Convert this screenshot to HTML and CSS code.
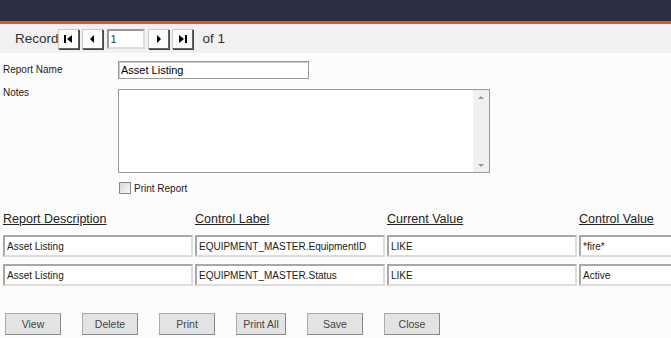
FILE: index.html
```html
<!doctype html>
<html>

<head>
    <title>Report Setup</title>
    <link rel="stylesheet" href="styles.css">
</head>

<body>
    <div class="topbar"></div>
    <div class="recordbar">
        <span class="record-label">Record</span>
        <button type="button" class="nav-btn">
            <svg width="9" height="8" viewBox="0 0 9 8"><rect x="0" y="0" width="2" height="8"/><path d="M8 0 L3 4 L8 8 Z"/></svg>
        </button>
        <button type="button" class="nav-btn">
            <svg width="9" height="8" viewBox="0 0 9 8"><path d="M6 0 L2 4 L6 8 Z"/></svg>
        </button>
        <input class="record-input" type="text" value="1">
        <button type="button" class="nav-btn">
            <svg width="9" height="8" viewBox="0 0 9 8"><path d="M3 0 L7 4 L3 8 Z"/></svg>
        </button>
        <button type="button" class="nav-btn">
            <svg width="9" height="8" viewBox="0 0 9 8"><path d="M1 0 L6 4 L1 8 Z"/><rect x="7" y="0" width="2" height="8"/></svg>
        </button>
        <span class="record-of">of 1</span>
    </div>

    <form class="report-form">
        <div class="field-row">
            <label class="field-label">Report Name</label>
            <input class="name-input" type="text" value="Asset Listing">
        </div>
        <div class="field-row notes-row">
            <label class="field-label">Notes</label>
            <div class="notes-box">
                <div class="notes-scroll">
                    <span class="arrow-up"></span>
                    <span class="arrow-down"></span>
                </div>
            </div>
        </div>
        <div class="check-row">
            <span class="checkbox"></span>
            <span>Print Report</span>
        </div>

        <div class="grid">
            <div class="col-head">Report Description</div>
            <div class="col-head">Control Label</div>
            <div class="col-head">Current Value</div>
            <div class="col-head">Control Value</div>

            <input class="cell" type="text" value="Asset Listing">
            <input class="cell" type="text" value="EQUIPMENT_MASTER.EquipmentID">
            <input class="cell" type="text" value="LIKE">
            <input class="cell" type="text" value="*fire*">

            <input class="cell" type="text" value="Asset Listing">
            <input class="cell" type="text" value="EQUIPMENT_MASTER.Status">
            <input class="cell" type="text" value="LIKE">
            <input class="cell" type="text" value="Active">
        </div>

        <div class="actions">
            <button type="button" class="btn">View</button>
            <button type="button" class="btn">Delete</button>
            <button type="button" class="btn">Print</button>
            <button type="button" class="btn narrow">Print All</button>
            <button type="button" class="btn">Save</button>
            <button type="button" class="btn">Close</button>
        </div>
    </form>
</body>

</html>
```

FILE: styles.css
```css
* {
    margin: 0;
    box-sizing: border-box;
}

body {
    font-family: Arial, "Liberation Sans", sans-serif;
    font-size: 10px;
    color: #1a1a1a;
    background-color: #fcfcfc;
    width: 671px;
    height: 338px;
    overflow: hidden;
}

.topbar {
    height: 24px;
    background-color: #2b3142;
    border-bottom: 3px solid #e8532b;
}

.recordbar {
    height: 29px;
    background-color: #f1f1f1;
    display: flex;
    align-items: center;
    padding-left: 15px;
}

.record-label {
    font-size: 13.5px;
    color: #333;
    margin-right: -1px;
}

.nav-btn {
    width: 21px;
    height: 20px;
    padding: 0;
    display: flex;
    align-items: center;
    justify-content: center;
    background-color: #fbfbfb;
    border: 1px solid #666;
    border-left-color: #ccc;
    border-top-color: #ccc;
    box-shadow: 1px 1px 0 #444;
    margin-right: 3px;
}

.nav-btn svg {
    fill: #000;
}

.record-input {
    width: 38px;
    height: 20px;
    font-size: 11px;
    font-family: Arial, "Liberation Sans", sans-serif;
    color: #333;
    padding: 0 2px;
    border: 2px solid #999;
    border-right-color: #ddd;
    border-bottom-color: #ddd;
    margin: 0 3px 0 1px;
}

.record-of {
    font-size: 13.5px;
    color: #333;
    margin-left: 7px;
}

.report-form {
    padding: 8px 0 0 3px;
}

.field-row {
    display: flex;
    align-items: flex-start;
}

.field-label {
    width: 115px;
    padding-top: 3px;
}

.name-input {
    width: 191px;
    height: 18px;
    font-size: 11px;
    font-family: Arial, "Liberation Sans", sans-serif;
    padding: 0 2px;
    border: 1px solid #999;
    box-shadow: inset 1px 1px 0 #ccc;
}

.notes-row {
    margin-top: 10px;
}

.notes-row .field-label {
    padding-top: 0;
    margin-top: -2px;
}

.notes-box {
    width: 372px;
    height: 84px;
    border: 1px solid #999;
    background-color: #fff;
    display: flex;
    justify-content: flex-end;
}

.notes-scroll {
    width: 16px;
    height: 100%;
    background-color: #f0f0f0;
    display: flex;
    flex-direction: column;
    justify-content: space-between;
    align-items: center;
    padding: 6px 0 5px;
}

.arrow-up,
.arrow-down {
    width: 0;
    height: 0;
    border-left: 3px solid transparent;
    border-right: 3px solid transparent;
}

.arrow-up {
    border-bottom: 3px solid #999;
}

.arrow-down {
    border-top: 3px solid #999;
}

.check-row {
    display: flex;
    align-items: center;
    margin: 9px 0 0 116px;
    gap: 3px;
}

.checkbox {
    width: 12px;
    height: 12px;
    border: 1px solid #888;
    background: linear-gradient(135deg, #d8d8d8, #f8f8f8);
}

.grid {
    display: grid;
    grid-template-columns: repeat(4, 190px);
    column-gap: 2px;
    row-gap: 7px;
    margin-top: 15px;
}

.col-head {
    font-size: 12.5px;
    text-decoration: underline;
    color: #222;
    height: 21px;
    padding-top: 3px;
    margin-bottom: -2px;
}

.cell {
    height: 22px;
    width: 190px;
    font-size: 10px;
    font-family: Arial, "Liberation Sans", sans-serif;
    color: #1a1a1a;
    padding: 0 2px;
    border: 2px solid #a8a8a8;
    border-right-color: #ddd;
    border-bottom-color: #ddd;
    background-color: #fff;
}

.actions {
    display: flex;
    gap: 21px;
    margin: 27px 0 0 2px;
}

.btn {
    width: 56px;
    height: 22px;
    font-size: 10.5px;
    font-family: Arial, "Liberation Sans", sans-serif;
    color: #444;
    background-color: #e3e3e3;
    border: 1px solid #888;
    border-top-color: #aaa;
    border-left-color: #aaa;
    padding: 0;
}

.btn.narrow {
    width: 50px;
}
```
